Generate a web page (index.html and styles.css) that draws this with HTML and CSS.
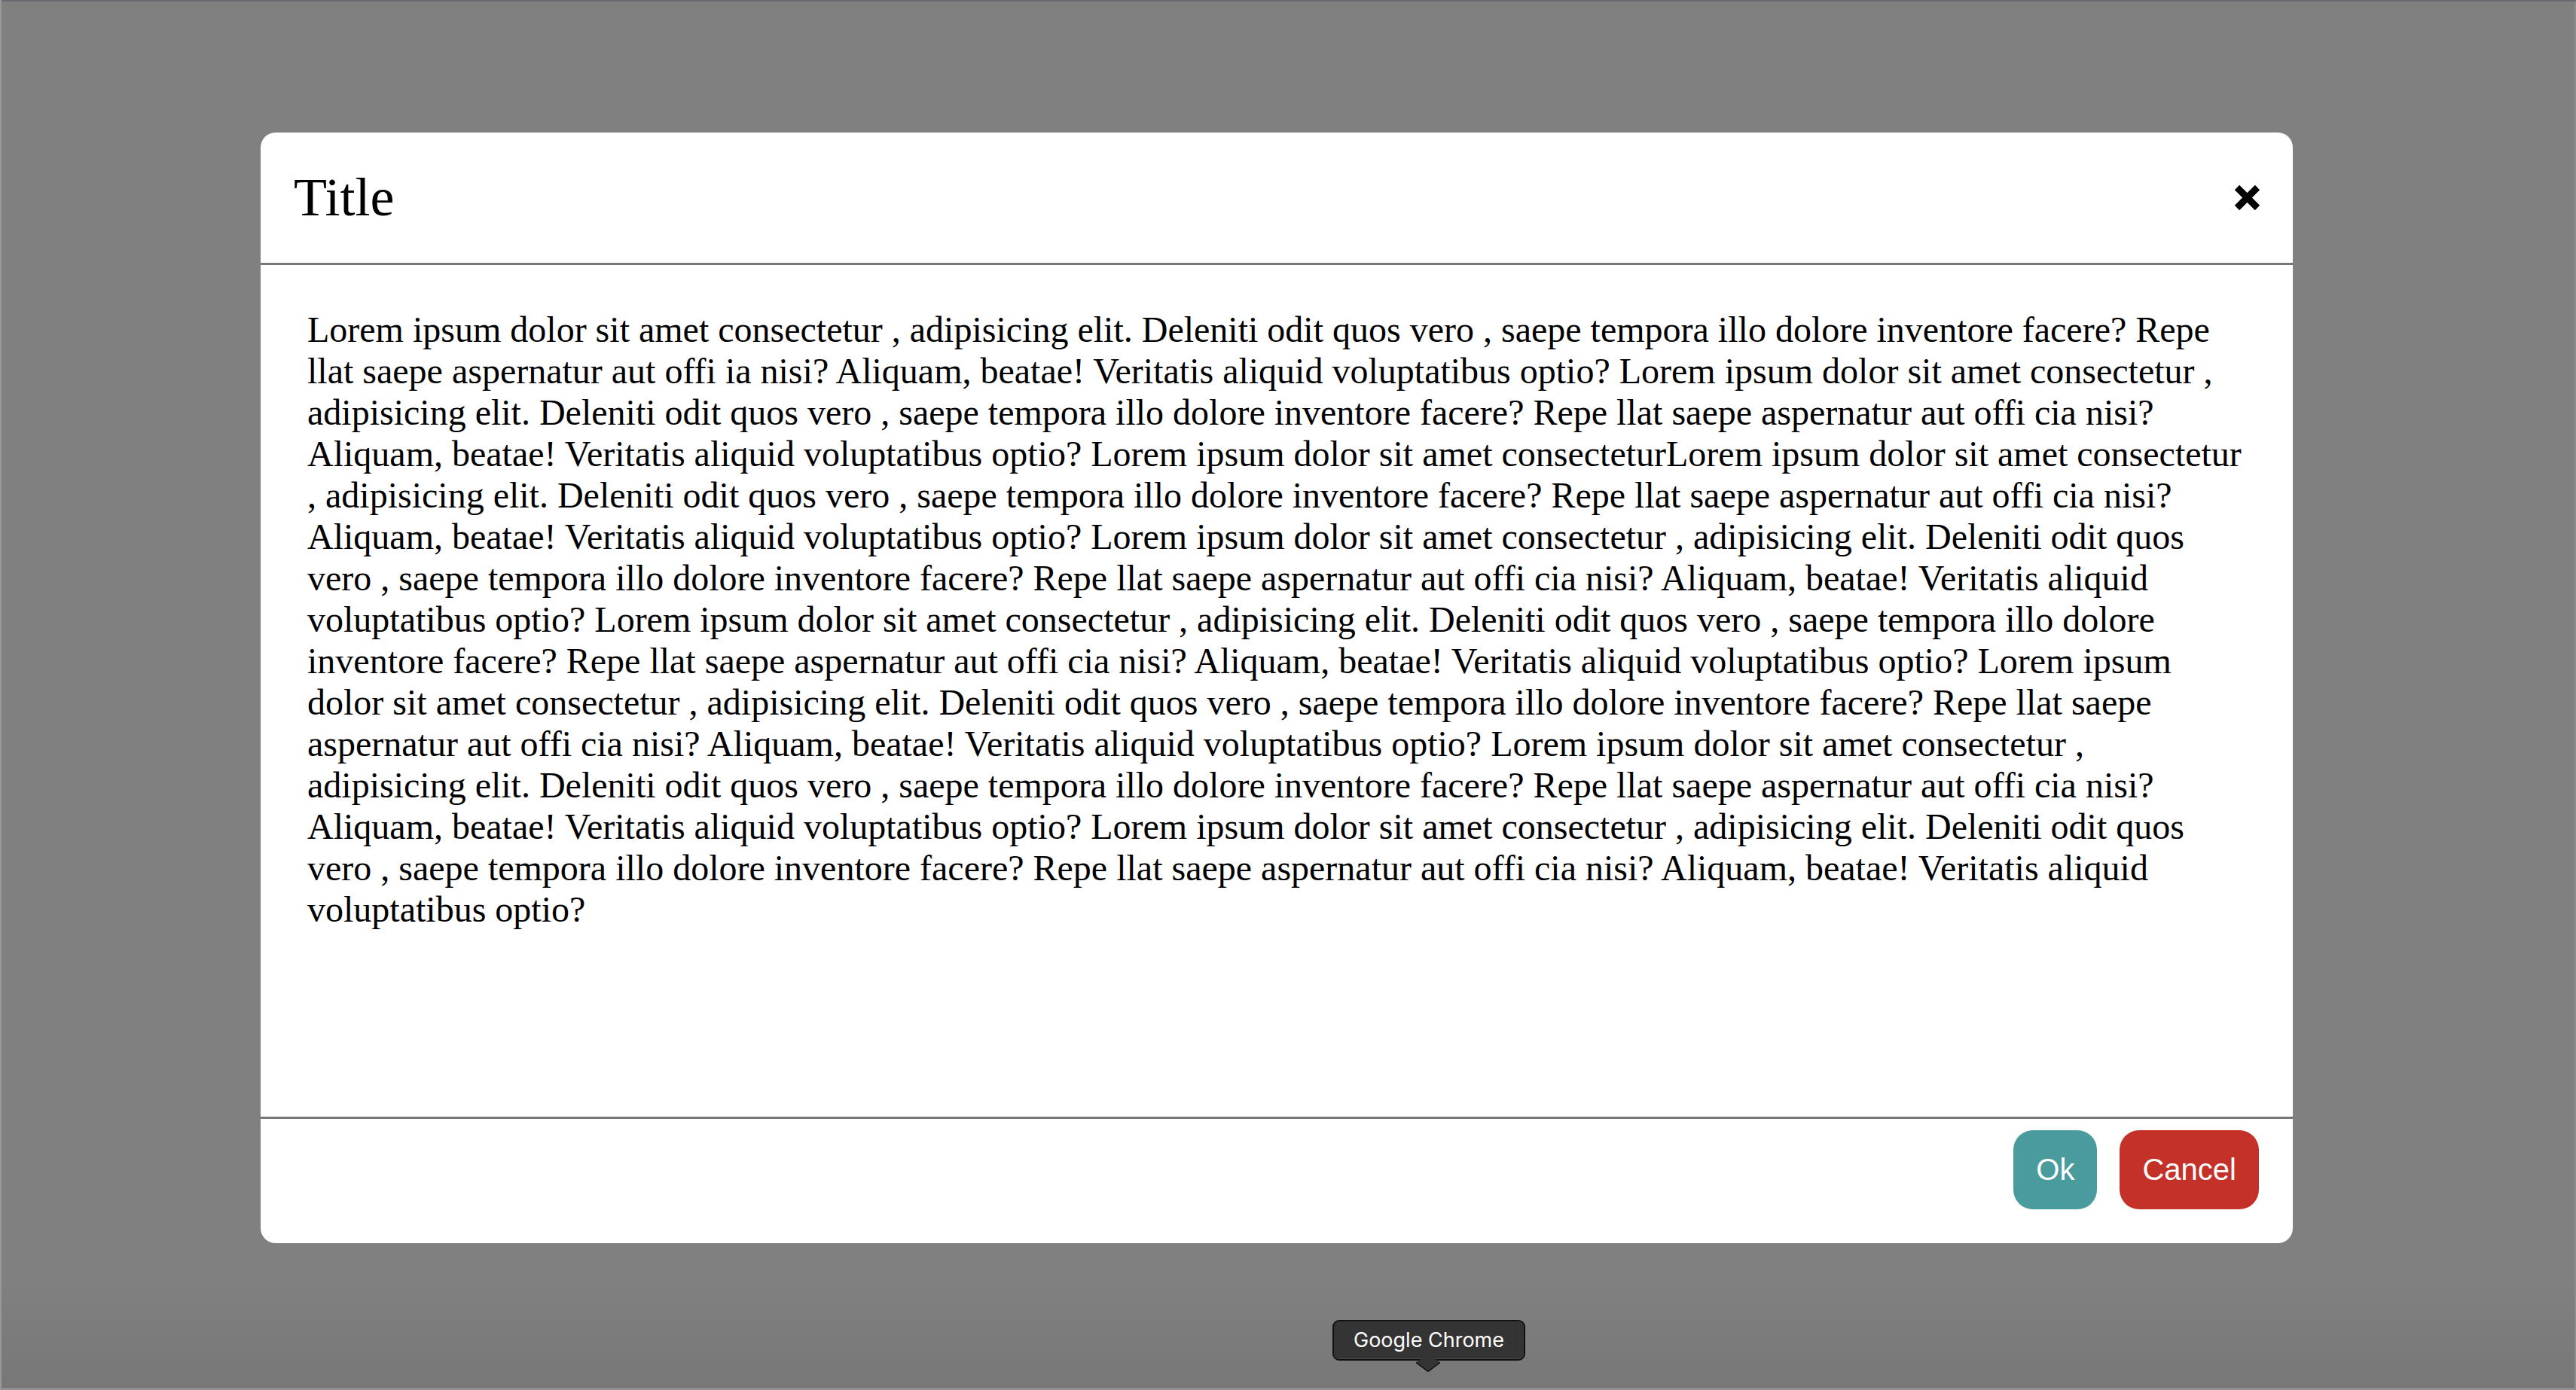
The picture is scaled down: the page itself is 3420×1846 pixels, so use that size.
FILE: index.html
```html
<!DOCTYPE html>
<html lang="en">
<head>
<meta charset="utf-8">
<title>Modal</title>
<link rel="stylesheet" href="styles.css">
</head>
<body>
<div class="screen">
  <div class="modal">
    <div class="modal-header">
      <h1 class="modal-title">Title</h1>
      <button class="close-btn" aria-label="Close">
        <svg width="35" height="35" viewBox="0 0 35 35"><path d="M4 4 L31 31 M31 4 L4 31" stroke="#000" stroke-width="9" fill="none"/></svg>
      </button>
    </div>
    <div class="modal-body">
      <p class="modal-text">Lorem ipsum dolor sit amet consectetur , adipisicing elit. Deleniti odit quos vero , saepe tempora illo dolore inventore facere? Repe llat saepe aspernatur aut offi ia nisi? Aliquam, beatae! Veritatis aliquid voluptatibus optio? Lorem ipsum dolor sit amet consectetur , adipisicing elit. Deleniti odit quos vero , saepe tempora illo dolore inventore facere? Repe llat saepe aspernatur aut offi cia nisi? Aliquam, beatae! Veritatis aliquid voluptatibus optio? Lorem ipsum dolor sit amet consecteturLorem ipsum dolor sit amet consectetur , adipisicing elit. Deleniti odit quos vero , saepe tempora illo dolore inventore facere? Repe llat saepe aspernatur aut offi cia nisi? Aliquam, beatae! Veritatis aliquid voluptatibus optio? Lorem ipsum dolor sit amet consectetur , adipisicing elit. Deleniti odit quos vero , saepe tempora illo dolore inventore facere? Repe llat saepe aspernatur aut offi cia nisi? Aliquam, beatae! Veritatis aliquid voluptatibus optio? Lorem ipsum dolor sit amet consectetur , adipisicing elit. Deleniti odit quos vero , saepe tempora illo dolore inventore facere? Repe llat saepe aspernatur aut offi cia nisi? Aliquam, beatae! Veritatis aliquid voluptatibus optio? Lorem ipsum dolor sit amet consectetur , adipisicing elit. Deleniti odit quos vero , saepe tempora illo dolore inventore facere? Repe llat saepe aspernatur aut offi cia nisi? Aliquam, beatae! Veritatis aliquid voluptatibus optio? Lorem ipsum dolor sit amet consectetur , adipisicing elit. Deleniti odit quos vero , saepe tempora illo dolore inventore facere? Repe llat saepe aspernatur aut offi cia nisi? Aliquam, beatae! Veritatis aliquid voluptatibus optio? Lorem ipsum dolor sit amet consectetur , adipisicing elit. Deleniti odit quos vero , saepe tempora illo dolore inventore facere? Repe llat saepe aspernatur aut offi cia nisi? Aliquam, beatae! Veritatis aliquid voluptatibus optio?</p>
    </div>
    <div class="modal-footer">
      <button class="btn btn-ok">Ok</button>
      <button class="btn btn-cancel">Cancel</button>
    </div>
  </div>
  <div class="tooltip">Google Chrome</div>
</div>
</body>
</html>
```

FILE: styles.css
```css
html, body {
  margin: 0;
  padding: 0;
}

body {
  width: 3420px;
  height: 1846px;
  overflow: hidden;
  background: #808080;
}

.screen {
  position: relative;
  width: 3420px;
  height: 1846px;
  box-sizing: border-box;
  padding: 176px 0 0 346px;
  background: linear-gradient(to bottom, rgba(0,0,0,0) 0, rgba(0,0,0,0) 1700px, rgba(0,0,0,0.07) 1843px, rgba(255,255,255,0.15) 1844px);
  box-shadow: inset 2px 0 0 #989898, inset 0 2px 0 #6a6970, inset -2px 0 0 #8c8c8c;
}

.modal {
  width: 2698px;
  background: #ffffff;
  border-radius: 20px;
  display: flex;
  flex-direction: column;
}

.modal-header {
  height: 173px;
  box-sizing: content-box;
  display: flex;
  align-items: center;
  justify-content: space-between;
  padding: 0 43px 0 44px;
  border-bottom: 3px solid #777777;
}

.modal-title {
  margin: 0;
  font-family: "Liberation Serif", "Times New Roman", serif;
  font-weight: normal;
  font-size: 72px;
  color: #000;
}

.close-btn {
  border: 0;
  background: none;
  padding: 0;
  width: 35px;
  height: 35px;
  display: block;
  cursor: pointer;
}

.close-btn svg {
  display: block;
}

.modal-body {
  box-sizing: content-box;
  height: 1073px;
  padding: 58px 60px 0 62px;
  border-bottom: 3px solid #777777;
}

.modal-text {
  margin: 0;
  font-family: "Liberation Serif", "Times New Roman", serif;
  font-size: 48px;
  line-height: 55px;
  color: #000;
}

.modal-footer {
  display: flex;
  justify-content: flex-end;
  gap: 30px;
  padding: 15px 45px 45px;
}

.btn {
  height: 105px;
  padding: 0 30px;
  border: 0;
  border-radius: 26px;
  font-family: "Liberation Sans", Arial, sans-serif;
  font-size: 40px;
  color: #ffffff;
  cursor: pointer;
}

.btn-ok {
  background: #4a9b9e;
}

.btn-cancel {
  background: #c43128;
}

.tooltip {
  position: absolute;
  left: 1769px;
  top: 1753px;
  width: 256px;
  height: 54px;
  box-sizing: border-box;
  background: #343434;
  border: 2px solid #111111;
  border-radius: 9px;
  box-shadow: inset 0 -1px 0 #4a4a4a, inset 0 1px 0 #3e3e3e;
  color: #ffffff;
  font-family: "Inter", "Noto Sans", sans-serif;
  font-size: 27px;
  line-height: 50px;
  text-align: center;
}

.tooltip::after {
  content: "";
  position: absolute;
  left: 113px;
  bottom: -17px;
  width: 22px;
  height: 22px;
  background: #343434;
  border-right: 2px solid #111111;
  border-bottom: 2px solid #111111;
  border-bottom-right-radius: 3px;
  transform: scaleY(0.75) rotate(45deg);
}
```
